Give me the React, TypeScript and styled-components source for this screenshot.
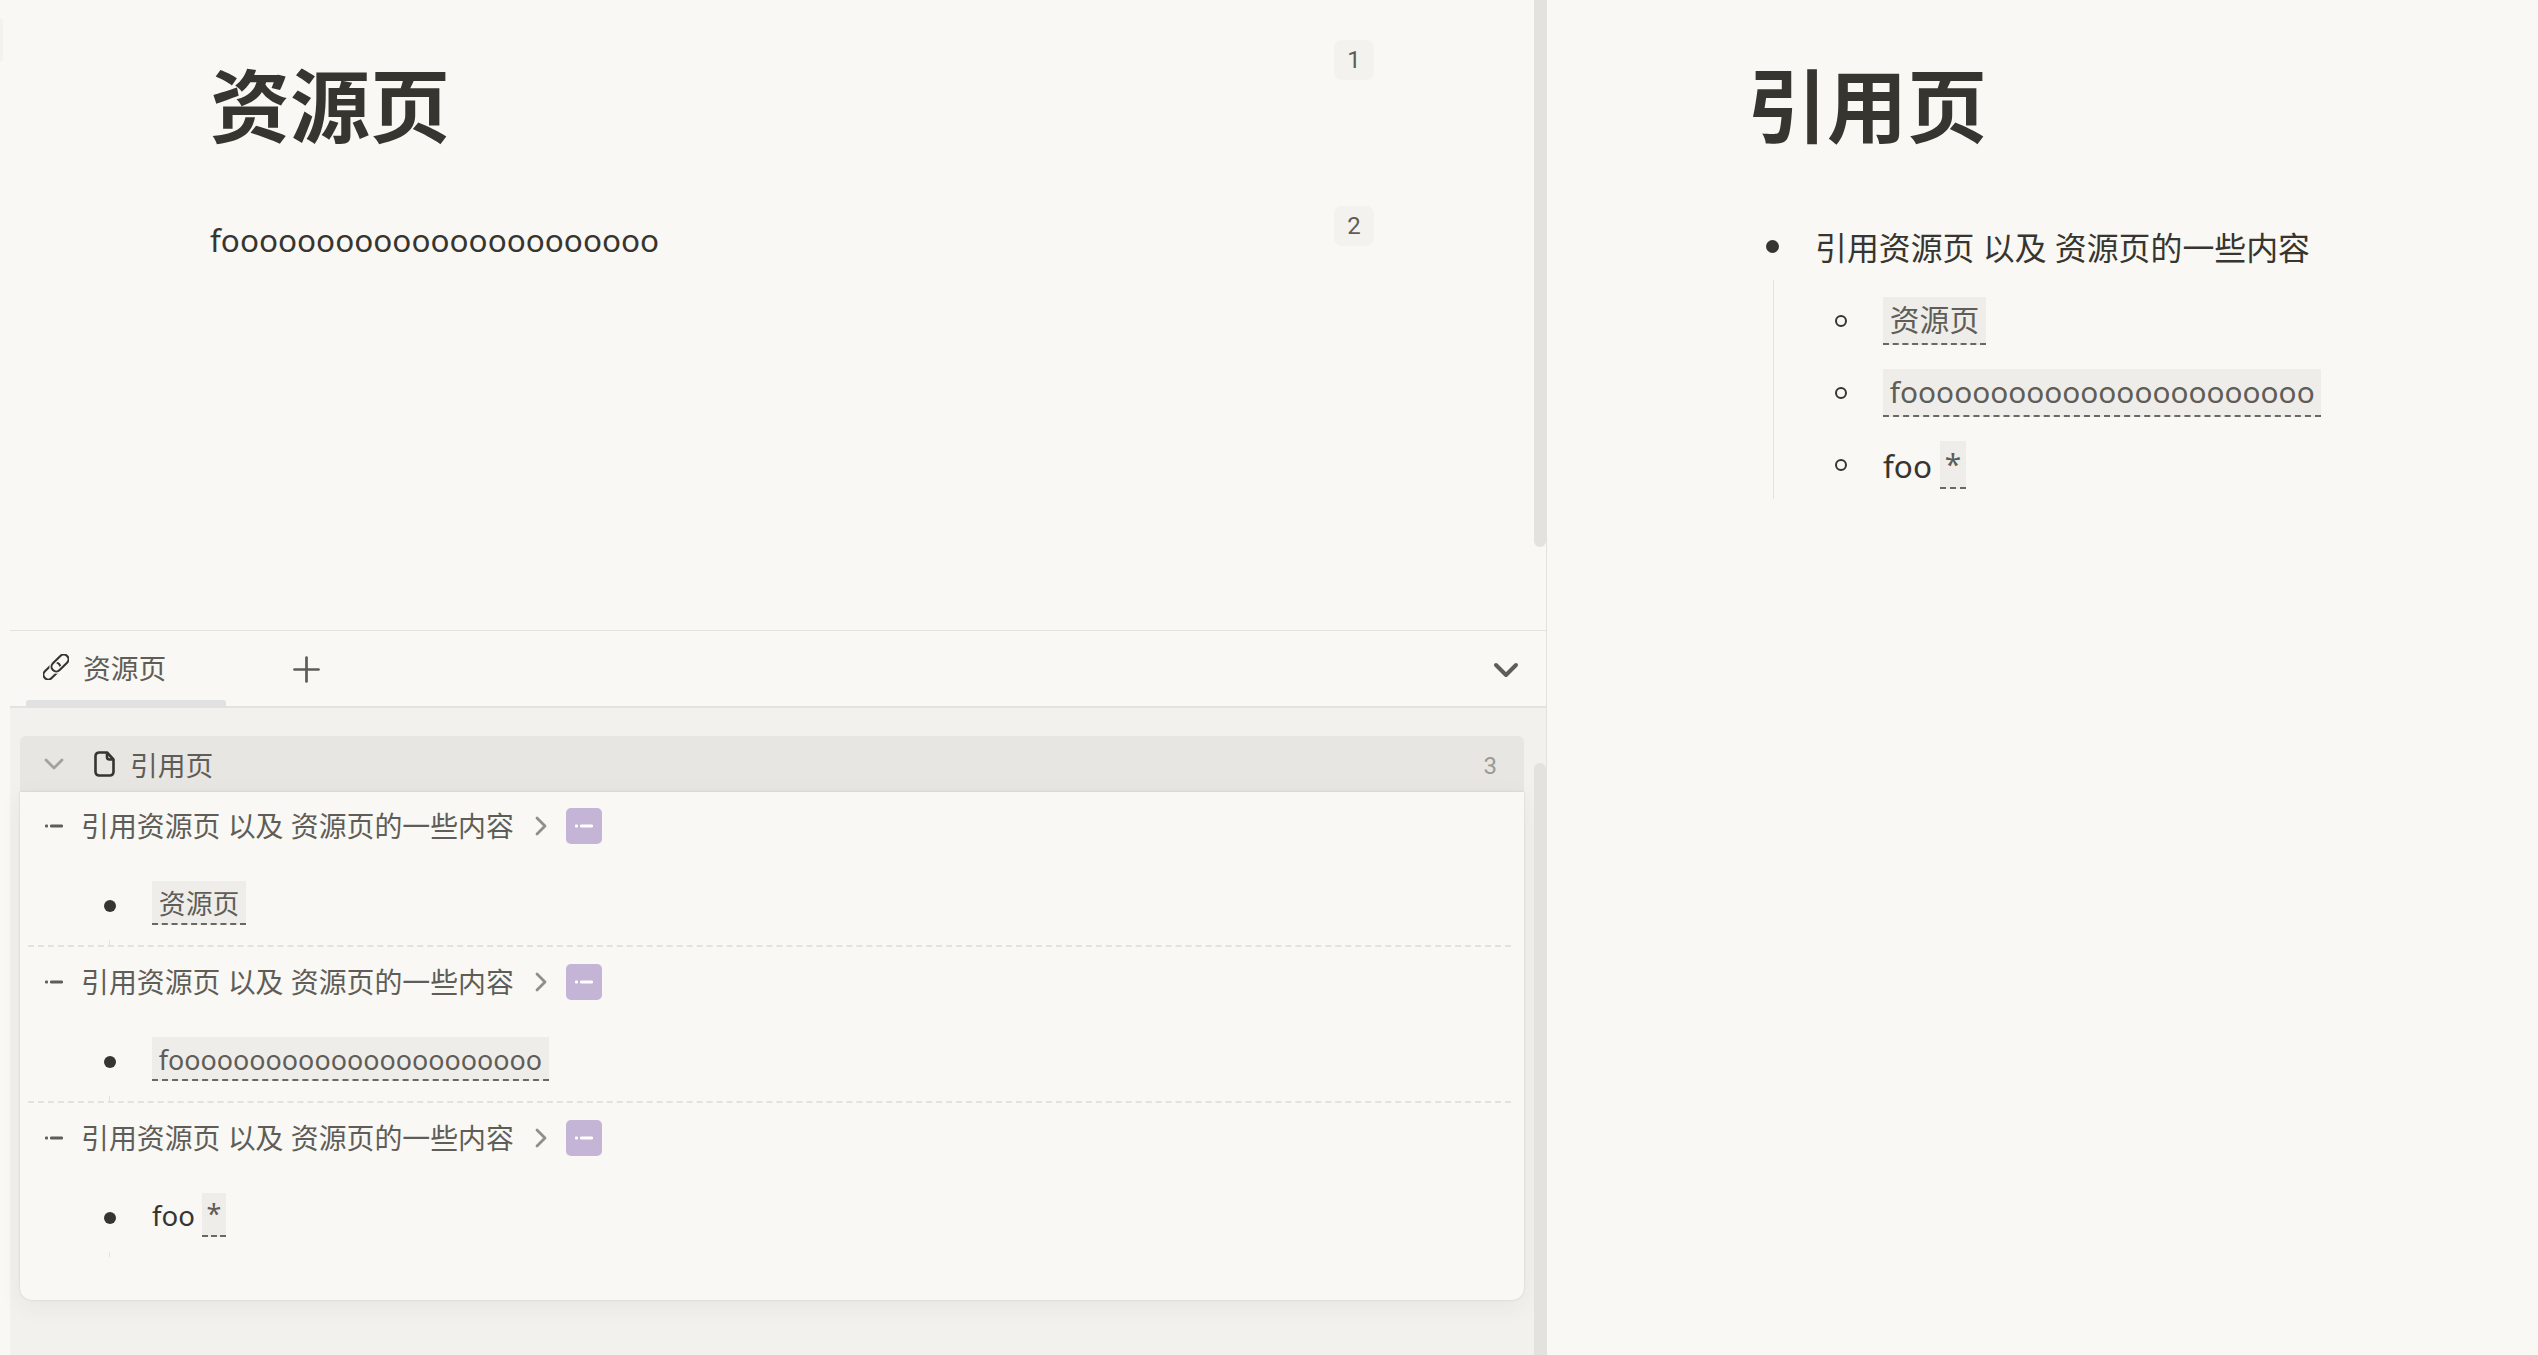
import React from 'react'
import styled, { createGlobalStyle } from 'styled-components'
import { ChevronDown, ChevronRight, Plus } from 'lucide-react'

const Color = {
  page: '#f9f8f4',
  panel: '#f2f1ed',
  header: '#e7e6e2',
  line: '#e3e2de',
  text: '#37352f',
  muted: '#5f5d58',
  pill: '#eeede9',
  badge: '#f3f2ee',
  purple: '#c4b5d7',
}

const GlobalStyle = createGlobalStyle`
  html, body {
    margin: 0;
    padding: 0;
    background: ${Color.page};
  }
  body {
    font-family: 'Noto Sans', 'Noto Sans CJK SC', sans-serif;
    color: ${Color.text};
  }
`

const Layout = styled.div`
  display: flex;
  height: 1355px;
  overflow: hidden;
`

const LeftPane = styled.div`
  position: relative;
  display: flex;
  flex-direction: column;
  width: 1546px;
  border-right: 1px solid ${Color.line};
`

const Handle = styled.div`
  position: absolute;
  left: 0;
  top: 18px;
  width: 3px;
  height: 44px;
  background: ${Color.badge};
  border-radius: 0 4px 4px 0;
`

const Scrollbar = styled.div<{ $top: number; $height: number; $round?: boolean }>`
  position: absolute;
  right: 0;
  top: ${(p) => p.$top}px;
  width: 12px;
  height: ${(p) => p.$height}px;
  background: ${Color.line};
  border-radius: ${(p) => (p.$round ? '6px 6px 0 0' : '0 0 6px 6px')};
`

const Editor = styled.div`
  height: 630px;
  padding: 40px 172px 0 210px;
  box-sizing: border-box;
`

const EditorRow = styled.div<{ $gap?: number }>`
  display: flex;
  justify-content: space-between;
  align-items: flex-start;
  margin-top: ${(p) => p.$gap ?? 0}px;
`

const Title = styled.h1`
  margin: 9px 0 0;
  font-size: 80px;
  line-height: 112px;
  font-weight: 700;
  color: ${Color.text};
`

const Paragraph = styled.p`
  margin: 11px 0 0;
  font-size: 31.5px;
  line-height: 46px;
`

const Badge = styled.span`
  display: flex;
  align-items: center;
  justify-content: center;
  width: 40px;
  height: 40px;
  border-radius: 8px;
  background: ${Color.badge};
  font-family: Roboto, sans-serif;
  font-size: 24px;
  color: ${Color.muted};
`

const RefPanel = styled.div`
  display: flex;
  flex-direction: column;
  flex: 1;
  margin-left: 10px;
`

const TabBar = styled.div`
  display: flex;
  align-items: flex-start;
  height: 78px;
  padding-left: 16px;
  padding-right: 20px;
  box-sizing: border-box;
  border-top: 1px solid ${Color.line};
  border-bottom: 2px solid ${Color.line};
`

const Tab = styled.div`
  position: relative;
  display: flex;
  align-items: center;
  gap: 14px;
  width: 200px;
  height: 75px;
  padding: 0 0 4px 17px;
  box-sizing: border-box;
  font-size: 27.8px;
  color: ${Color.muted};

  &::after {
    content: '';
    position: absolute;
    left: 0;
    right: 0;
    bottom: 0;
    height: 6px;
    background: #e0e1e2;
    border-radius: 3px 3px 0 0;
  }
`

const AddButton = styled.div`
  display: flex;
  margin: 18px 0 0 60px;
  color: ${Color.muted};
`

const Collapse = styled.div`
  display: flex;
  margin: 19px 0 0 auto;
  color: ${Color.muted};
`

const PanelBody = styled.div`
  flex: 1;
  background: ${Color.panel};
  padding: 28px 22px 0 10px;
`

const GroupHeader = styled.div`
  display: flex;
  align-items: center;
  height: 56px;
  padding: 0 27px 0 18px;
  background: ${Color.header};
  border-radius: 6px 6px 0 0;
  font-size: 27.8px;
  color: ${Color.muted};
`

const CollapseIcon = styled(ChevronDown)`
  color: #a3a19c;
  margin-right: 24px;
`

const DocGlyph = styled.svg`
  color: ${Color.text};
  margin-right: 15px;
`

const Count = styled.span`
  margin: 4px 0 0 auto;
  font-family: Roboto, sans-serif;
  font-size: 24px;
  color: #9b9a96;
`

const Card = styled.div`
  height: 508px;
  background: ${Color.page};
  border-radius: 0 0 12px 12px;
  box-shadow: 0 0 2px rgba(55, 53, 47, 0.2), 0 6px 24px rgba(55, 53, 47, 0.06);
  padding: 0 13px 0 8px;
`

const Section = styled.section`
  padding: 17px 0 20px;
  border-bottom: 2px dashed ${Color.line};

  &:first-child {
    padding-top: 16px;
  }
  &:last-child {
    border-bottom: 0;
  }
`

const Crumb = styled.div`
  display: flex;
  align-items: center;
  height: 36px;
  padding-left: 17px;
  font-size: 27.9px;
  color: ${Color.muted};
`

const CrumbText = styled.span`
  margin-left: 18px;
  padding-bottom: 3px;
  white-space: pre;
`

const CrumbArrow = styled(ChevronRight)`
  color: #8f8e8a;
  margin-left: 11px;
  margin-right: 9px;
`

const Tag = styled.span`
  display: flex;
  align-items: center;
  justify-content: center;
  width: 36px;
  height: 36px;
  border-radius: 5px;
  background: ${Color.purple};
  color: #fff;
`

const RefList = styled.div`
  position: relative;
  display: flex;
  align-items: center;
  height: 44px;
  margin-top: 37px;
  padding-left: 76px;
  color: ${Color.text};
  font-size: 27.6px;

  &::after {
    content: '';
    position: absolute;
    left: 81px;
    bottom: -20px;
    width: 1px;
    height: 5px;
    background: ${Color.line};
  }
`

const Dot = styled.span`
  width: 12px;
  height: 12px;
  margin: 6px 36px 0 0;
  border-radius: 50%;
  background: ${Color.text};
  flex-shrink: 0;
`

const Pill = styled.span<{ $size: number; $height: number; $pad?: number; $drop?: number }>`
  display: inline-block;
  height: ${(p) => p.$height}px;
  padding: ${(p) => p.$drop ?? 0}px ${(p) => p.$pad ?? 6.8}px 0;
  box-sizing: border-box;
  background: ${Color.pill};
  border-bottom: 2px dashed #6a6862;
  color: ${Color.muted};
  font-size: ${(p) => p.$size}px;
  line-height: ${(p) => p.$height - 2}px;
`

const Gap = styled.span`
  white-space: pre;
`

const RightPane = styled.div`
  flex: 1;
  padding: 40px 0 0 200px;
`

const OuterItem = styled.div`
  display: flex;
  align-items: center;
  height: 48px;
  margin: 61px 0 0 19px;
  font-size: 31.9px;
`

const OuterDot = styled.span`
  width: 13px;
  height: 13px;
  margin-right: 36px;
  border-radius: 50%;
  background: ${Color.text};
`

const Nested = styled.div`
  display: flex;
  flex-direction: column;
  gap: 24px;
  margin: 10px 0 0 26px;
  padding: 17px 0 10px 61px;
  border-left: 1px solid ${Color.line};
`

const NestedItem = styled.div`
  display: flex;
  align-items: center;
  height: 48px;
  font-size: 31.5px;
`

const Ring = styled.span`
  width: 12px;
  height: 12px;
  margin-right: 36px;
  border: 2px solid ${Color.text};
  border-radius: 50%;
  box-sizing: border-box;
`

const CrumbDash = styled.span`
  display: flex;
  color: ${Color.muted};
`

const ListDash = () => (
  <svg width="18" height="6" viewBox="0 0 18 6" fill="currentColor">
    <rect x="0" y="1.6" width="3" height="3" rx="1" />
    <rect x="5" y="1.4" width="13" height="3.2" rx="1.4" />
  </svg>
)

const ChainIcon = () => (
  <svg width="26" height="26" viewBox="0 0 26 26" fill="none" stroke={Color.text} strokeWidth="2.1">
    <rect x="4.25" y="7" width="9.5" height="20" rx="4.75" transform="rotate(45 9 17)" />
    <rect x="12.25" y="-1" width="9.5" height="20" rx="4.75" transform="rotate(45 17 9)" stroke={Color.page} strokeWidth="4.4" />
    <rect x="12.25" y="-1" width="9.5" height="20" rx="4.75" transform="rotate(45 17 9)" />
  </svg>
)

const DocIcon = () => (
  <DocGlyph width="21" height="26" viewBox="0 0 21 26" fill="none" stroke="currentColor" strokeWidth="2.6" strokeLinejoin="round">
    <path d="M4.5 1.5h8.5l6.5 7V21a3.5 3.5 0 0 1-3.5 3.5H5A3.5 3.5 0 0 1 1.5 21V5A3.5 3.5 0 0 1 5 1.5" />
    <path d="M13 1.5V6a2.5 2.5 0 0 0 2.5 2.5h4" />
  </DocGlyph>
)

const longFoo = 'f' + 'o'.repeat(23)
const crumb = '引用资源页 以及 资源页的一些内容'

const refs = [
  <Pill key="a" $size={26.88} $height={44} $drop={2}>资源页</Pill>,
  <Pill key="b" $size={26.88} $height={44} $drop={2}>{longFoo}</Pill>,
  <React.Fragment key="c">
    foo<Gap> </Gap>
    <Pill $size={26.88} $height={44} $pad={4.5}>*</Pill>
  </React.Fragment>,
]

const nested = [
  <Pill key="a" $size={29.8} $height={48}>资源页</Pill>,
  <Pill key="b" $size={29.8} $height={48}>{longFoo}</Pill>,
  <React.Fragment key="c">
    foo<Gap> </Gap>
    <Pill $size={29.8} $height={48} $pad={4.5}>*</Pill>
  </React.Fragment>,
]

const App = () => (
  <Layout>
    <GlobalStyle />
    <LeftPane>
      <Handle />
      <Scrollbar $top={0} $height={547} />
      <Scrollbar $top={763} $height={592} $round />
      <Editor>
        <EditorRow>
          <Title>资源页</Title>
          <Badge>1</Badge>
        </EditorRow>
        <EditorRow $gap={45}>
          <Paragraph>{longFoo}</Paragraph>
          <Badge>2</Badge>
        </EditorRow>
      </Editor>
      <RefPanel>
        <TabBar>
          <Tab>
            <ChainIcon />
            资源页
          </Tab>
          <AddButton>
            <Plus size={41} strokeWidth={1.6} />
          </AddButton>
          <Collapse>
            <ChevronDown size={40} strokeWidth={2.4} />
          </Collapse>
        </TabBar>
        <PanelBody>
          <GroupHeader>
            <CollapseIcon size={32} strokeWidth={2.1} />
            <DocIcon />
            引用页
            <Count>3</Count>
          </GroupHeader>
          <Card>
            {refs.map((content, index) => (
              <Section key={index}>
                <Crumb>
                  <CrumbDash>
                    <ListDash />
                  </CrumbDash>
                  <CrumbText>{crumb}</CrumbText>
                  <CrumbArrow size={32} strokeWidth={2.1} />
                  <Tag>
                    <ListDash />
                  </Tag>
                </Crumb>
                <RefList>
                  <Dot />
                  {content}
                </RefList>
              </Section>
            ))}
          </Card>
        </PanelBody>
      </RefPanel>
    </LeftPane>
    <RightPane>
      <Title>引用页</Title>
      <OuterItem>
        <OuterDot />
        {crumb}
      </OuterItem>
      <Nested>
        {nested.map((content, index) => (
          <NestedItem key={index}>
            <Ring />
            {content}
          </NestedItem>
        ))}
      </Nested>
    </RightPane>
  </Layout>
)

export default App
